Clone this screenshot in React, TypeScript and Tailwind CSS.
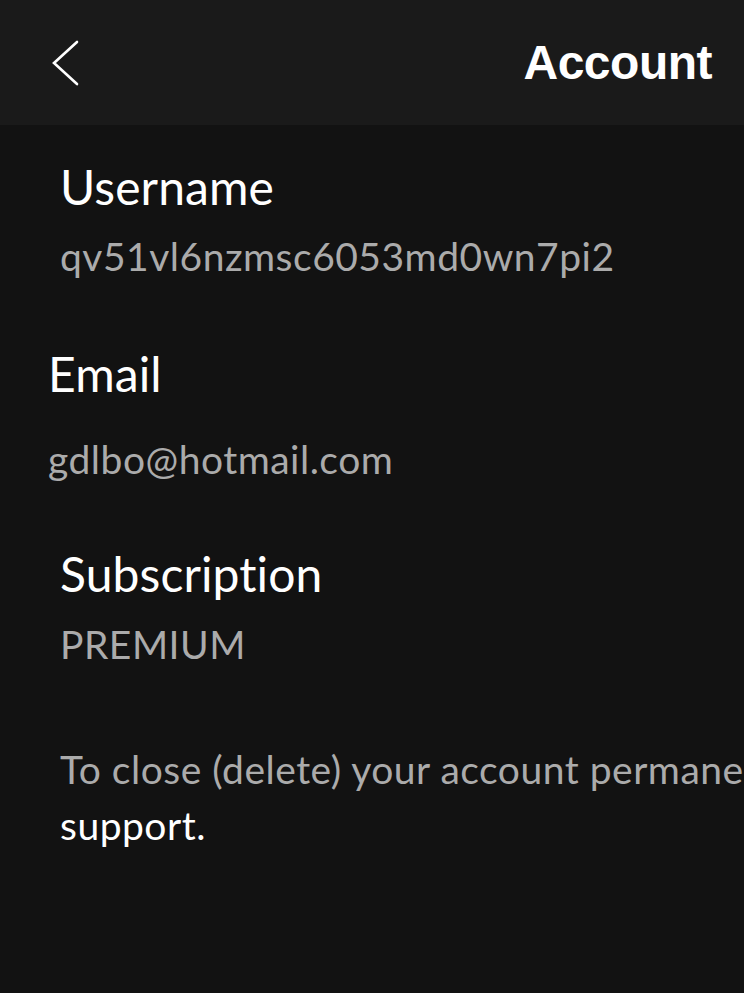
const fields = [
  { label: "Username", value: "qv51vl6nzmsc6053md0wn7pi2", box: "pl-[60px] mb-[68px]", gap: "mt-[19px]" },
  { label: "Email", value: "gdlbo@hotmail.com", box: "pl-[48px] mb-[65px]", gap: "mt-[35px]" },
  { label: "Subscription", value: "PREMIUM", box: "pl-[60px]", gap: "mt-[20px]" },
];

const BackIcon = () => (
  <svg width="34" height="50" viewBox="0 0 34 50" fill="none">
    <path
      d="M27 4 L4 25 L27 46"
      stroke="#ffffff"
      strokeWidth="2.6"
      strokeLinecap="round"
      strokeLinejoin="miter"
    />
  </svg>
);

const App = () => {
  return (
    <div
      className="w-[744px] h-[993px] overflow-hidden bg-[#121212] text-white"
      style={{ fontFamily: "Lato, 'Noto Sans', sans-serif" }}
    >
      <div className="h-[125px] bg-[#1a1a1a] flex items-center justify-between pl-[50px] pr-[32px]">
        <BackIcon />
        <h1
          className="text-[48px] font-bold tracking-[-0.5px]"
          style={{ fontFamily: "'Liberation Sans', Arial, sans-serif" }}
        >
          Account
        </h1>
      </div>

      <div className="pt-[36px]">
        {fields.map((f) => (
          <div key={f.label} className={f.box}>
            <div className="text-[48px] leading-[52px] tracking-[0.1px]">{f.label}</div>
            <div className={`${f.gap} text-[39px] leading-[48px] tracking-[0.5px] text-[#ababab]`}>
              {f.value}
            </div>
          </div>
        ))}

        <p className="pl-[60px] w-[980px] text-[39px] leading-[56px] tracking-[0.5px] text-[#ababab] mt-[73px]">
          To close (delete) your account permanently, contact{" "}
          <span className="text-white">support.</span>
        </p>
      </div>
    </div>
  );
};

export default App;
